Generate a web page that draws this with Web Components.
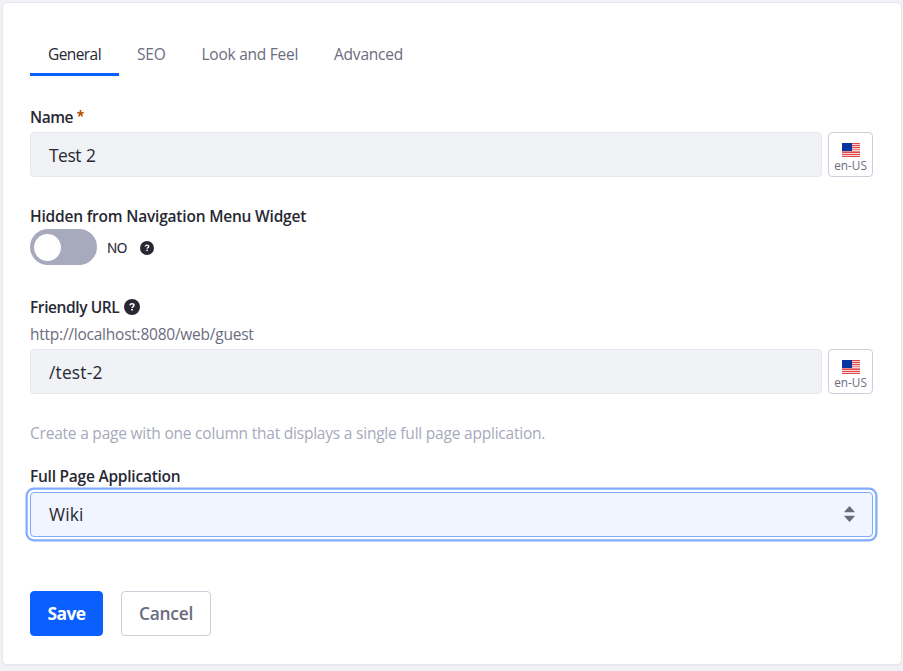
<!DOCTYPE html>
<html lang="en">
<head>
<meta charset="utf-8">
<title>Page Settings</title>
<style>
html,body{margin:0;height:100%}
body{background:#f1f2f5;color:#272833;font:400 15.5px/24px "Open Sans","Noto Sans",sans-serif}
</style>
</head>
<body>
<settings-card>
  <tab-bar>
    <tab-item active style="--w:89px;letter-spacing:-.58px">General</tab-item>
    <tab-item style="--w:64.5px;letter-spacing:-.2px">SEO</tab-item>
    <tab-item style="--w:132.5px;letter-spacing:-.25px">Look and Feel</tab-item>
    <tab-item style="--w:105px;letter-spacing:-.21px">Advanced</tab-item>
  </tab-bar>
  <form-field label="Name" required style="--top:29px;--track:-.5px">
    <localized-input lang="en-US"><span style="letter-spacing:-.47px;word-spacing:1px">Test 2</span></localized-input>
  </form-field>
  <form-field label="Hidden from Navigation Menu Widget" style="--top:27px;--gap:1px;--track:-.2px">
    <toggle-switch>NO</toggle-switch>
  </form-field>
  <form-field label="Friendly URL" help hint="http://localhost:8080/web/guest" style="--top:30px;--track:-.4px">
    <localized-input lang="en-US"><span style="letter-spacing:.16px">/test-2</span></localized-input>
  </form-field>
  <help-text>Create a page with one column that displays a single full page application.</help-text>
  <form-field label="Full Page Application" style="--top:19px;--gap:4px;--track:-.24px">
    <select-box>Wiki</select-box>
  </form-field>
  <button-row>
    <action-button primary style="--w:73px">Save</action-button>
    <action-button style="--w:90px">Cancel</action-button>
  </button-row>
</settings-card>
<script>
const define = (name, css, html) => customElements.define(name, class extends HTMLElement {
  connectedCallback() {
    if (this.shadowRoot) return;
    const t = document.createElement('template');
    t.innerHTML = `<style>*{box-sizing:border-box}${css}</style>` + (typeof html === 'function' ? html(this) : html);
    this.attachShadow({mode: 'open'}).append(t.content.cloneNode(true));
  }
});

define('settings-card', `
:host{display:block;box-sizing:border-box;width:900px;height:663px;margin-left:2px;padding:29px 28px 0 27px;background:#fff;border:1px solid #e7e7ed;border-radius:5px;box-shadow:0 1px 1px #e7e8ee}
:host{position:relative;top:2px}`, '<slot></slot>');

define('tab-bar', ':host{display:flex;height:44px}', '<slot></slot>');

define('tab-item', `
:host{display:block;box-sizing:border-box;width:var(--w);height:44px;padding-left:18px;line-height:44px;color:#6b6c7e;white-space:nowrap}
:host([active]){color:#272833;border-bottom:3px solid #0b5fff}`, '<slot></slot>');

define('help-icon', `
:host{display:block;width:var(--size,16px);height:var(--size,16px)}
svg{display:block;width:100%;height:100%}`,
`<svg viewBox="0 0 16 16"><circle cx="8" cy="8" r="8" fill="#272833"/><path d="M5.900 6.300C6.100 5.100 6.900 4.700 8 4.700c1.200 0 2 .5 2 1.500 0 1.400-1.900 1.300-1.900 2.700" fill="none" stroke="#fff" stroke-width="1.500"/><rect x="7.200" y="9.900" width="1.700" height="1.600" fill="#fff"/></svg>`);

define('form-field', `
:host{display:block;margin-top:var(--top)}
.label{display:flex;height:24px;font-weight:600;letter-spacing:var(--track);white-space:nowrap}
.star{display:block;width:7px;height:7px;margin:5px 0 0 4px}
help-icon{margin:4px 0 0 5px}
.hint{height:24px;margin-top:3px;color:#6b6c7e;letter-spacing:-.24px}
.body{margin-top:var(--gap,3px)}`,
el => `<div class="label"><span>${el.getAttribute('label')}</span>${
  el.hasAttribute('required') ? '<svg class="star" viewBox="0 0 7 7"><path d="M3.500 0v3.500M.3 2.500l3.200 1M6.700 2.500l-3.200 1M1.500 6.400l2-2.900M5.500 6.400l-2-2.900" stroke="#b95000" stroke-width="1.600"/></svg>' : ''}${
  el.hasAttribute('help') ? '<help-icon></help-icon>' : ''}</div>${
  el.hasAttribute('hint') ? `<div class="hint">${el.getAttribute('hint')}</div>` : ''}<div class="body"><slot></slot></div>`);

define('us-flag', ':host{display:block;width:18px;height:14px}svg{display:block}',
`<svg width="18" height="14" viewBox="0 0 18 14" shape-rendering="crispEdges"><path fill="#f7d3d4" d="M0 0h18v14H0z"/><path fill="#e2494c" d="M9 0h9v1H9zM9 2h9v1H9zM9 4h9v1H9zM0 9h18v1H0zM0 11h18v1H0zM0 13h18v1H0z"/><path fill="#e98a8c" d="M9 6h9v1H9zM0 8h18v1H0z"/><path fill="#0735a0" d="M0 0h10v8H0z"/></svg>`);

define('localized-input', `
:host{display:flex;gap:6px;height:45px}
.input{flex:1;padding:1px 18px 0;border:1px solid #e7e7ed;border-radius:4px;background:#f1f2f5;font-size:17.4px;line-height:43px}
.locale{display:flex;flex-direction:column;align-items:center;width:45px;padding-top:10px;border:1px solid #cdced9;border-radius:4px;background:#fff;color:#6b6c7e;font-size:11.8px;line-height:16px}`,
el => `<div class="input"><slot></slot></div><div class="locale"><us-flag></us-flag><span>${el.getAttribute('lang')}</span></div>`);

define('toggle-switch', `
:host{display:flex;align-items:center;height:36px;font-size:13.6px;font-weight:500}
.track{width:67px;height:36px;padding:5px 4px;border-radius:18px;background:#a7a9bc}
.knob{width:27px;height:27px;border-radius:50%;background:#fff}
.text{width:33px;margin:2px 0 0 10px;letter-spacing:-.4px;-webkit-text-stroke:.2px currentColor}
help-icon{--size:14px;margin-top:2px}`,
'<div class="track"><div class="knob"></div></div><span class="text"><slot></slot></span><help-icon></help-icon>');

define('help-text', ':host{display:block;height:24px;margin-top:27px;color:#a7a9bc;letter-spacing:-.216px;white-space:nowrap}', '<slot></slot>');

define('select-box', `
:host{display:flex;box-sizing:border-box;align-items:center;justify-content:space-between;height:45px;padding:0 17px 1px 18px;border:1px solid #80acff;border-radius:4px;background:#f0f5ff;box-shadow:0 0 0 2.25px #fff,0 0 0 4.5px #80acff;font-size:17.4px;letter-spacing:.1px}
svg{display:block}`,
'<span><slot></slot></span><svg width="12" height="16" viewBox="0 0 12 16"><path d="M6.500 0l5 5.500v.8h-10v-.8zM1.500 9.700h10v.8l-5 5.500-5-5.500z" fill="#6b6c7e"/></svg>');

define('button-row', ':host{display:flex;gap:18px;margin-top:54px}', '<slot></slot>');

define('action-button', `
:host{display:block;box-sizing:border-box;width:var(--w);height:45px;border:1px solid #cdced9;border-radius:4px;background:#fff;color:#6b6c7e;font-size:17.4px;font-weight:600;line-height:43px;letter-spacing:-.27px;text-align:center}
:host([primary]){border-color:#0b5fff;background:#0b5fff;color:#fff;font-weight:700;letter-spacing:-.6px}`, '<slot></slot>');
</script>
</body>
</html>
